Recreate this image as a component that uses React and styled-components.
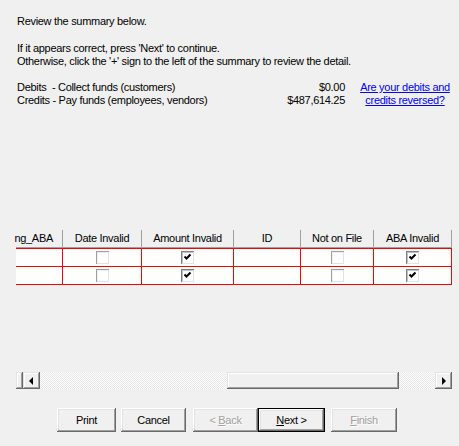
import React from "react";
import styled, { createGlobalStyle } from "styled-components";

const GlobalStyle = createGlobalStyle`
  html, body {
    margin: 0;
    padding: 0;
    background: #f0f0f0;
  }
`;

const columns = [
  { label: "ng_ABA", width: 47, align: "right" },
  { label: "Date Invalid", width: 79, field: "date" },
  { label: "Amount Invalid", width: 92, field: "amount" },
  { label: "ID", width: 67 },
  { label: "Not on File", width: 73, field: "file" },
  { label: "ABA Invalid", width: 78, field: "aba" },
];

const rows = [
  { date: false, amount: true, file: false, aba: true },
  { date: false, amount: true, file: false, aba: true },
];

function Check({ checked }) {
  return (
    <CheckBox $checked={checked}>
      {checked && (
        <svg width="9" height="9" viewBox="0 0 9 9">
          <path d="M1.5 3.5 L3.5 5.5 L7.5 1.5" stroke="#000" strokeWidth="2" fill="none" />
        </svg>
      )}
    </CheckBox>
  );
}

export default function App() {
  return (
    <Page>
      <GlobalStyle />
      <Intro>
        <Line>Review the summary below.</Line>
      </Intro>
      <Para>
        <Line>If it appears correct, press 'Next' to continue.</Line>
        <Line>Otherwise, click the '+' sign to the left of the summary to review the detail.</Line>
      </Para>
      <Summary>
        <Totals>
          <TotalRow>
            <span>Debits&nbsp; - Collect funds (customers)</span>
            <span>$0.00</span>
          </TotalRow>
          <TotalRow>
            <span>Credits - Pay funds (employees, vendors)</span>
            <span>$487,614.25</span>
          </TotalRow>
        </Totals>
        <HelpLink href="#">Are your debits and credits reversed?</HelpLink>
      </Summary>

      <Grid>
        <HeaderRow>
          {columns.map((c) => (
            <HeaderCell key={c.label} $w={c.width} $align={c.align}>
              {c.label}
            </HeaderCell>
          ))}
        </HeaderRow>
        {rows.map((r, i) => (
          <DataRow key={i} $first={i === 0}>
            {columns.map((c) => (
              <DataCell key={c.label} $w={c.width}>
                {c.field && <Check checked={r[c.field]} />}
              </DataCell>
            ))}
          </DataRow>
        ))}
      </Grid>

      <ScrollBar>
        <Stub />
        <ArrowButton>
          <ArrowLeft />
        </ArrowButton>
        <Track $w={187} />
        <Thumb />
        <Track $w={36} />
        <ArrowButton>
          <ArrowRight />
        </ArrowButton>
      </ScrollBar>

      <ButtonRow>
        <Button $w={59}>Print</Button>
        <Button $w={65} $gap={5}>Cancel</Button>
        <Button $w={65} $gap={7} disabled>
          &lt; <u>B</u>ack
        </Button>
        <Button $w={67} $gap={0} $default>
          <u>N</u>ext &gt;
        </Button>
        <Button $w={66} $gap={6} disabled>
          <u>F</u>inish
        </Button>
      </ButtonRow>
    </Page>
  );
}

const Page = styled.div`
  width: 459px;
  height: 446px;
  background: #f0f0f0;
  font-family: "Liberation Sans", Arial, sans-serif;
  font-size: 11px;
  letter-spacing: -0.3px;
  line-height: 13px;
  color: #000;
  display: flex;
  flex-direction: column;
  overflow: hidden;
`;

const Intro = styled.div`
  padding: 15px 0 0 17px;
`;

const Para = styled.div`
  padding: 14px 0 0 17px;
`;

const Line = styled.div`
  white-space: nowrap;
`;

const Summary = styled.div`
  display: flex;
  padding: 13px 0 0 17px;
`;

const Totals = styled.div`
  width: 328px;
  display: flex;
  flex-direction: column;
`;

const TotalRow = styled.div`
  display: flex;
  justify-content: space-between;
  white-space: nowrap;
`;

const HelpLink = styled.a`
  width: 94px;
  margin-left: 13px;
  color: #0000ff;
  text-decoration: underline;
  text-align: center;
`;

const Grid = styled.div`
  margin: 123px 0 0 16px;
  width: 436px;
  display: flex;
  flex-direction: column;
`;

const HeaderRow = styled.div`
  display: flex;
  height: 18px;
`;

const HeaderCell = styled.div`
  width: ${(p) => p.$w}px;
  box-sizing: border-box;
  border-right: 1px solid #a0a0a0;
  border-bottom: 1px solid #a0a0a0;
  background: #f0f0f0;
  display: flex;
  align-items: center;
  justify-content: ${(p) => (p.$align === "right" ? "flex-end" : "center")};
  padding-right: ${(p) => (p.$align === "right" ? "9px" : "0")};
  white-space: nowrap;
`;

const DataRow = styled.div`
  display: flex;
  height: ${(p) => (p.$first ? 19 : 18)}px;
  box-sizing: border-box;
  background: #fff;
  border-top: ${(p) => (p.$first ? "1px solid #ff0000" : "none")};
  border-bottom: 1px solid #ff0000;
`;

const DataCell = styled.div`
  width: ${(p) => p.$w}px;
  box-sizing: border-box;
  border-right: 1px solid #ff0000;
  display: flex;
  align-items: center;
  justify-content: center;
`;

const CheckBox = styled.div`
  width: 13px;
  height: 13px;
  box-sizing: border-box;
  background: #fff;
  display: flex;
  align-items: center;
  justify-content: center;
  box-shadow: inset 1px 1px ${(p) => (p.$checked ? "#808080" : "#a0a0a0")},
    inset -1px -1px #e3e3e3,
    inset 2px 2px ${(p) => (p.$checked ? "#c0c0c0" : "#f0f0f0")};
`;

const ScrollBar = styled.div`
  margin: 87px 0 0 16px;
  width: 436px;
  height: 17px;
  display: flex;
  background: repeating-conic-gradient(#ffffff 0 25%, #e6e6e6 0 50%) 0 0 / 2px 2px;
`;

const raised = `
  background: #f0f0f0;
  box-shadow: inset -1px -1px #696969, inset 1px 1px #e3e3e3,
    inset -2px -2px #a0a0a0, inset 2px 2px #ffffff;
`;

const Stub = styled.div`
  width: 7px;
  ${raised}
`;

const ArrowButton = styled.div`
  width: 17px;
  display: flex;
  align-items: center;
  justify-content: center;
  ${raised}
`;

const ArrowLeft = styled.div`
  width: 0;
  height: 0;
  border-top: 4px solid transparent;
  border-bottom: 4px solid transparent;
  border-right: 4px solid #000;
  margin-left: -1px;
`;

const ArrowRight = styled.div`
  width: 0;
  height: 0;
  border-top: 4px solid transparent;
  border-bottom: 4px solid transparent;
  border-left: 4px solid #000;
  margin-left: 1px;
`;

const Track = styled.div`
  width: ${(p) => p.$w}px;
`;

const Thumb = styled.div`
  width: 173px;
  ${raised}
`;

const ButtonRow = styled.div`
  display: flex;
  margin-top: 19px;
  padding-left: 57px;
`;

const Button = styled.button`
  width: ${(p) => p.$w}px;
  height: 24px;
  margin: 0 0 0 ${(p) => p.$gap || 0}px;
  padding: 0;
  font: inherit;
  letter-spacing: -0.3px;
  color: #000;
  background: #f0f0f0;
  border: ${(p) => (p.$default ? "1px solid #000" : "none")};
  box-shadow: inset -1px -1px #696969, inset 1px 1px #ffffff,
    inset -2px -2px #a0a0a0, inset 2px 2px #e3e3e3;
  &:disabled {
    color: #a0a0a0;
    text-shadow: 1px 1px #ffffff;
  }
  u {
    text-decoration: underline;
  }
`;
